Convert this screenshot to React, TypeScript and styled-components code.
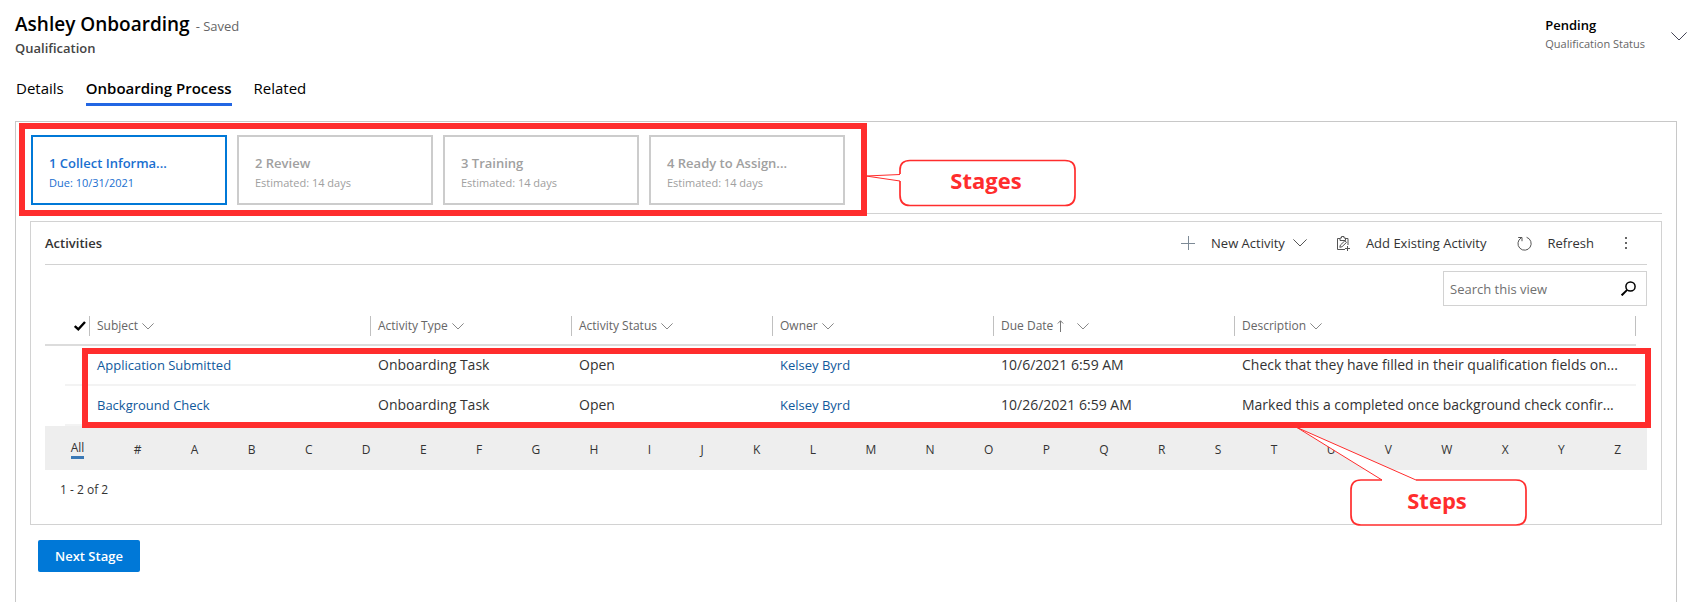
import React from "react";
import styled, { createGlobalStyle, css } from "styled-components";

const GlobalStyle = createGlobalStyle`
  *, *::before, *::after { box-sizing: border-box; }
  body {
    margin: 0;
    background: #fff;
    color: #333;
    font-family: "Open Sans", "Noto Sans", sans-serif;
    font-size: 13px;
    line-height: 20px;
  }
  button, input { font: inherit; color: inherit; }
  button { background: none; border: 0; padding: 0; cursor: pointer; }
  h1, h2, p, ol, ul { margin: 0; padding: 0; }
  ol, ul { list-style: none; }
  a { text-decoration: none; color: inherit; }
  svg { display: block; flex: none; }
`;

const Page = styled.div`
  min-height: 100vh;
  display: flex;
  flex-direction: column;
  overflow: hidden;
`;

const Header = styled.header`
  display: flex;
  justify-content: space-between;
  padding: 12px 13px 0 15px;
`;

const TitleRow = styled.div`
  display: flex;
  align-items: baseline;
  gap: 6px;
`;

const Title = styled.h1`
  font-size: 19px;
  line-height: 24px;
  font-weight: 600;
  color: #000;
`;

const SavedNote = styled.span`
  line-height: 16px;
  color: #666;
`;

const EntityName = styled.p`
  margin-top: 2px;
  font-weight: 600;
  color: #444;
`;

const StatusArea = styled.div`
  display: flex;
  align-items: flex-start;
  gap: 26px;
  padding-top: 3px;
`;

const StatusValue = styled.p`
  font-weight: 600;
  color: #000;
`;

const StatusLabel = styled.p`
  font-size: 11px;
  line-height: 18px;
  color: #666;
`;

const ExpandButton = styled.button`
  padding-top: 17px;
  color: #445;
`;

const Tabs = styled.nav`
  display: flex;
  gap: 22px;
  padding: 18px 16px 15px;
`;

const Tab = styled.a<{ $active?: boolean }>`
  padding-bottom: 3px;
  border-bottom: 3px solid ${(p) => (p.$active ? "#2266e3" : "transparent")};
  font-size: 15px;
  line-height: 24px;
  font-weight: ${(p) => (p.$active ? 600 : 400)};
  color: #000;
`;

const Panel = styled.main`
  flex: 1;
  margin: 0 23px 0 15px;
  padding: 0 14px 24px;
  border: 1px solid #c8c8c8;
  border-bottom: 0;
`;

const StageSection = styled.section`
  display: flex;
  padding: 13px 1px 8px;
  border-bottom: 1px solid #d2d2d2;
`;

const StageArea = styled.div`
  position: relative;
`;

const StageList = styled.ol`
  display: flex;
  gap: 10px;
`;

const StageCard = styled.button<{ $active?: boolean }>`
  display: block;
  width: 196px;
  padding: 16px 16px 10px;
  border: 2px solid ${(p) => (p.$active ? "#0078d7" : "#ccc")};
  text-align: left;
  color: ${(p) => (p.$active ? "#1a6fd0" : "#a0a0a0")};
`;

const StageName = styled.span`
  display: block;
  font-weight: 600;
`;

const StageDate = styled.span`
  display: block;
  font-size: 11px;
`;

const Highlight = styled.div<{ $area: "stages" | "steps" }>`
  position: absolute;
  inset: ${(p) => (p.$area === "stages" ? "-12px -22px -11px -12px" : "42px -15px -2px 37px")};
  border: 6px solid #ff2d2d;
  pointer-events: none;
`;

const Callout = styled.div<{ $area: "stages" | "steps" }>`
  position: absolute;
  z-index: 1;
  color: #ff2d2d;
  ${(p) =>
    p.$area === "stages"
      ? css`
          top: 30px;
          left: 100%;
        `
      : css`
          top: calc(100% + 4px);
          right: 118px;
        `}
`;

const CalloutText = styled.span`
  position: absolute;
  right: 2px;
  bottom: 3px;
  width: 176px;
  font-size: 22px;
  line-height: 48px;
  font-weight: 700;
  text-align: center;
`;

const Card = styled.section`
  margin-top: 7px;
  padding: 0 14px 24px;
  border: 1px solid #d2d2d2;
`;

const CardHeader = styled.div`
  display: flex;
  align-items: center;
  justify-content: space-between;
  height: 43px;
  border-bottom: 1px solid #d2d2d2;
`;

const CardTitle = styled.h2`
  font-size: 13px;
  font-weight: 600;
`;

const Toolbar = styled.div`
  display: flex;
  align-items: center;
  gap: 30px;
  padding-right: 19px;
`;

const Command = styled.button`
  display: flex;
  align-items: center;
  gap: 16px;
`;

const CommandLabel = styled.span`
  display: flex;
  align-items: center;
  gap: 8px;
`;

const MoreButton = styled.button`
  color: #666;
`;

const SearchBox = styled.label`
  display: flex;
  align-items: center;
  width: 204px;
  height: 35px;
  margin: 6px 0 0 auto;
  padding: 0 10px 0 6px;
  border: 1px solid #d2d2d2;
`;

const SearchInput = styled.input`
  flex: 1;
  min-width: 0;
  padding: 0;
  border: 0;
  outline: 0;
  background: none;
  &::placeholder { color: #707070; opacity: 1; }
`;

const TableArea = styled.div`
  position: relative;
  margin-right: 11px;
`;

const Table = styled.table`
  width: 100%;
  table-layout: fixed;
  border-spacing: 0;
`;

const Column = styled.col<{ $width?: number }>`
  width: ${(p) => (p.$width ? `${p.$width}px` : "auto")};
`;

const HeadCell = styled.th`
  padding: 10px 0 8px;
  border-bottom: 2px solid #dcdcdc;
  font-size: 12px;
  font-weight: 400;
  text-align: left;
  color: #666;
`;

const HeadLabel = styled.div<{ $last?: boolean }>`
  display: flex;
  align-items: center;
  height: 20px;
  padding-left: 7px;
  border-left: 1px solid #c0c0c0;
  border-right: ${(p) => (p.$last ? "1px solid #c0c0c0" : "0")};
`;

const SortButton = styled.button`
  display: flex;
  align-items: center;
  gap: 4px;
`;

const SortMark = styled.span`
  padding-right: 9px;
`;

const SelectAll = styled.button`
  display: block;
  margin-left: 9px;
  color: #000;
`;

const Cell = styled.td`
  height: 40px;
  padding: 0 0 0 8px;
  border-bottom: 2px solid #f3f3f3;
  font-size: 14px;
  white-space: nowrap;
`;

const GutterCell = styled.td`
  padding: 0;
`;

const RecordLink = styled.a`
  font-size: 13px;
  color: #10599c;
`;

const LetterBar = styled.ul`
  display: flex;
  justify-content: space-around;
  align-items: center;
  height: 44px;
  padding: 3px 1px 0;
  background: #eee;
  font-size: 12px;
`;

const Letter = styled.a<{ $active?: boolean }>`
  display: block;
  line-height: 16px;
  border-bottom: ${(p) => (p.$active ? "3px solid #3a78b5" : "0")};
`;

const RecordCount = styled.p`
  padding: 10px 15px 0;
  font-size: 12px;
`;

const NextButton = styled.button`
  display: block;
  margin: 15px 8px 0;
  padding: 6px 17px;
  border-radius: 2px;
  background: #0078d7;
  color: #fff;
  font-weight: 600;
`;

const Chevron = ({ width, color }: { width: number; color: string }) => (
  <svg width={width} height={width / 2 + 1} viewBox={`0 0 ${width} ${width / 2 + 1}`} fill="none" stroke={color} aria-hidden="true">
    <path d={`M.4 .4 L${width / 2} ${width / 2} L${width - 0.4} .4`} />
  </svg>
);

const PlusIcon = () => (
  <svg width="14" height="14" viewBox="0 0 14 14" fill="none" stroke="#7d8a96" aria-hidden="true">
    <path d="M7.5 0V14M0 7.5H14" />
  </svg>
);

const ClipboardIcon = () => (
  <svg width="13" height="15" viewBox="0 0 13 15" fill="none" stroke="#555" aria-hidden="true">
    <path d="M8 13.5H.5V2.500H3M8.500 2.500H11V9M3 2V4.500H8.500V2H7V.5H4.500V2ZM10.500 10V15M8 12.500H13" />
    <path d="M2.800 11.300L3.400 9L7.900 4.800L9.500 6.400L5.100 10.700Z" />
  </svg>
);

const RefreshIcon = () => (
  <svg width="15" height="15" viewBox="0 0 15 15" fill="none" stroke="#555" aria-hidden="true">
    <path d="M9.600 1.300A6.600 6.600 0 1 1 4.200 1.900M1.200 1.500H5V5.200" />
  </svg>
);

const MoreIcon = () => (
  <svg width="4" height="14" viewBox="0 0 4 14" fill="currentColor" aria-hidden="true">
    <path d="M1 1H3V3H1ZM1 6H3V8H1ZM1 11H3V13H1Z" />
  </svg>
);

const SearchIcon = () => (
  <svg width="15" height="15" viewBox="0 0 15 15" fill="none" stroke="#000" aria-hidden="true">
    <circle cx="9.500" cy="5.500" r="4.600" strokeWidth="1.500" />
    <path d="M6.200 8.900L.6 14.400" strokeWidth="2" />
  </svg>
);

const CheckIcon = () => (
  <svg width="12" height="10" viewBox="0 0 12 10" fill="none" stroke="currentColor" strokeWidth="2.400" aria-hidden="true">
    <path d="M.8 5L4.300 8.300L11 1" />
  </svg>
);

const SortArrow = () => (
  <svg width="7" height="12" viewBox="0 0 7 12" fill="none" stroke="#777" aria-hidden="true">
    <path d="M3.500 12V.8M.8 3.500L3.500 .8L6.200 3.500" />
  </svg>
);

const StagesBubble = () => (
  <svg width="215" height="48" viewBox="0 0 215 48" fill="none" aria-hidden="true">
    <path
      d="M39 15V11Q39 1.500 49 1.500H204Q214 1.500 214 11V36Q214 46.500 204 46.500H49Q39 46.500 39 36V22Z"
      fill="#fff"
    />
    <path
      d="M39 15V11Q39 1.500 49 1.500H204Q214 1.500 214 11V36Q214 46.500 204 46.500H49Q39 46.500 39 36V22"
      stroke="currentColor"
      strokeWidth="1.700"
    />
    <path d="M39 15.500L5 17L39 22" stroke="currentColor" />
  </svg>
);

const StepsBubble = () => (
  <svg width="231" height="101" viewBox="0 0 231 101" fill="none" aria-hidden="true">
    <path d="M86 54L1 1.500L120 54H220Q230 54 230 64V89Q230 99 220 99H65Q55 99 55 89V64Q55 54 65 54Z" fill="#fff" />
    <path
      d="M86 54H65Q55 54 55 64V89Q55 99 65 99H220Q230 99 230 89V64Q230 54 220 54H120"
      stroke="currentColor"
      strokeWidth="1.700"
    />
    <path d="M86 54L1 1.500L120 54" stroke="currentColor" />
  </svg>
);

const stages = [
  { name: "1 Collect Informa...", date: "Due: 10/31/2021", active: true },
  { name: "2 Review", date: "Estimated: 14 days" },
  { name: "3 Training", date: "Estimated: 14 days" },
  { name: "4 Ready to Assign...", date: "Estimated: 14 days" },
];

const columns = [
  { label: "Subject", width: 281 },
  { label: "Activity Type", width: 201 },
  { label: "Activity Status", width: 201 },
  { label: "Owner", width: 221 },
  { label: "Due Date", width: 241, sorted: true },
  { label: "Description" },
];

const activities = [
  {
    subject: "Application Submitted",
    type: "Onboarding Task",
    status: "Open",
    owner: "Kelsey Byrd",
    due: "10/6/2021 6:59 AM",
    description: "Check that they have filled in their qualification fields on...",
  },
  {
    subject: "Background Check",
    type: "Onboarding Task",
    status: "Open",
    owner: "Kelsey Byrd",
    due: "10/26/2021 6:59 AM",
    description: "Marked this a completed once background check confir...",
  },
];

const letters = ["All", "#", ..."ABCDEFGHIJKLMNOPQRSTUVWXYZ"];

export default function App() {
  return (
    <Page>
      <GlobalStyle />
      <Header>
        <div>
          <TitleRow>
            <Title>Ashley Onboarding</Title>
            <SavedNote>- Saved</SavedNote>
          </TitleRow>
          <EntityName>Qualification</EntityName>
        </div>
        <StatusArea>
          <div>
            <StatusValue>Pending</StatusValue>
            <StatusLabel>Qualification Status</StatusLabel>
          </div>
          <ExpandButton aria-label="Show header details">
            <Chevron width={16} color="#445" />
          </ExpandButton>
        </StatusArea>
      </Header>

      <Tabs aria-label="Form sections">
        <Tab href="#details">Details</Tab>
        <Tab href="#process" $active aria-current="page">Onboarding Process</Tab>
        <Tab href="#related">Related</Tab>
      </Tabs>

      <Panel>
        <StageSection aria-label="Stages">
          <StageArea>
            <StageList>
              {stages.map((s) => (
                <li key={s.name}>
                  <StageCard $active={s.active}>
                    <StageName>{s.name}</StageName>
                    <StageDate>{s.date}</StageDate>
                  </StageCard>
                </li>
              ))}
            </StageList>
            <Highlight $area="stages">
              <Callout $area="stages">
                <StagesBubble />
                <CalloutText>Stages</CalloutText>
              </Callout>
            </Highlight>
          </StageArea>
        </StageSection>

        <Card>
          <CardHeader>
            <CardTitle>Activities</CardTitle>
            <Toolbar>
              <Command>
                <PlusIcon />
                <CommandLabel>
                  New Activity
                  <Chevron width={14} color="#555" />
                </CommandLabel>
              </Command>
              <Command>
                <ClipboardIcon />
                Add Existing Activity
              </Command>
              <Command>
                <RefreshIcon />
                Refresh
              </Command>
              <MoreButton aria-label="More commands">
                <MoreIcon />
              </MoreButton>
            </Toolbar>
          </CardHeader>

          <SearchBox>
            <SearchInput type="text" placeholder="Search this view" aria-label="Search this view" />
            <SearchIcon />
          </SearchBox>

          <TableArea>
            <Table>
              <colgroup>
                <Column $width={20} />
                <Column $width={24} />
                {columns.map((c) => (
                  <Column key={c.label} $width={c.width} />
                ))}
              </colgroup>
              <thead>
                <tr>
                  <HeadCell />
                  <HeadCell>
                    <SelectAll aria-label="Select all rows">
                      <CheckIcon />
                    </SelectAll>
                  </HeadCell>
                  {columns.map((c, i) => (
                    <HeadCell key={c.label} scope="col">
                      <HeadLabel $last={i === columns.length - 1}>
                        <SortButton>
                          {c.label}
                          {c.sorted && (
                            <SortMark>
                              <SortArrow />
                            </SortMark>
                          )}
                          <Chevron width={12} color="#888" />
                        </SortButton>
                      </HeadLabel>
                    </HeadCell>
                  ))}
                </tr>
              </thead>
              <tbody>
                {activities.map((a) => (
                  <tr key={a.subject}>
                    <GutterCell />
                    <Cell />
                    <Cell>
                      <RecordLink href="#activity">{a.subject}</RecordLink>
                    </Cell>
                    <Cell>{a.type}</Cell>
                    <Cell>{a.status}</Cell>
                    <Cell>
                      <RecordLink href="#owner">{a.owner}</RecordLink>
                    </Cell>
                    <Cell>{a.due}</Cell>
                    <Cell>{a.description}</Cell>
                  </tr>
                ))}
              </tbody>
            </Table>
            <Highlight $area="steps">
              <Callout $area="steps">
                <StepsBubble />
                <CalloutText>Steps</CalloutText>
              </Callout>
            </Highlight>
          </TableArea>

          <LetterBar>
            {letters.map((l, i) => (
              <li key={l}>
                <Letter href="#filter" $active={i === 0}>{l}</Letter>
              </li>
            ))}
          </LetterBar>
          <RecordCount>1 - 2 of 2</RecordCount>
        </Card>

        <NextButton>Next Stage</NextButton>
      </Panel>
    </Page>
  );
}
